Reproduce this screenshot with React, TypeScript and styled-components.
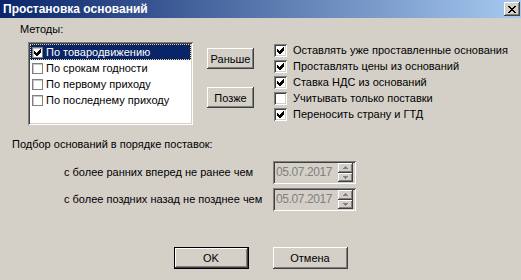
import React from "react";
import styled, { createGlobalStyle } from "styled-components";

const GlobalStyle = createGlobalStyle`
  html, body { margin: 0; padding: 0; background: #d4d0c8; }
  body { font-family: "Liberation Sans", Arial, sans-serif; font-size: 11px; color: #000; }
`;

const raised = `
  box-shadow: inset -1px -1px #404040, inset 1px 1px #ffffff, inset -2px -2px #808080, inset 2px 2px #d4d0c8;
`;
const sunken = `
  box-shadow: inset 1px 1px #808080, inset -1px -1px #ffffff, inset 2px 2px #404040, inset -2px -2px #d4d0c8;
`;

const Window = styled.div`
  width: 521px;
  height: 280px;
  background: #d4d0c8;
  display: flex;
  flex-direction: column;
  overflow: hidden;
`;

const TitleBar = styled.div`
  height: 18px;
  flex: none;
  display: flex;
  align-items: center;
  justify-content: space-between;
  padding: 0 1px 0 3px;
  background: linear-gradient(to right, #0a246a, #a6caf0);
`;

const Title = styled.span`
  color: #fff;
  font-weight: bold;
  font-size: 12px;
  line-height: 18px;
`;

const CloseButton = styled.div`
  width: 16px;
  height: 14px;
  background: #d4d0c8;
  ${raised}
  display: flex;
  align-items: center;
  justify-content: center;
`;

const TopSection = styled.div`
  display: flex;
  padding-top: 5px;
`;

const MethodsCol = styled.div`
  display: flex;
  flex-direction: column;
  padding-left: 20px;
`;

const Label = styled.div<{ $indent?: number }>`
  height: 13px;
  line-height: 13px;
  white-space: nowrap;
  padding-left: ${(p) => p.$indent ?? 0}px;
`;

const ListBox = styled.div`
  margin: 6px 0 0 8px;
  width: 165px;
  height: 83px;
  box-sizing: border-box;
  padding: 2px;
  background: #fff;
  ${sunken}
`;

const ListRow = styled.div<{ $selected?: boolean }>`
  height: 16px;
  display: flex;
  align-items: center;
  box-sizing: border-box;
  padding-left: 1px;
  background: ${(p) => (p.$selected ? "#0a246a" : "transparent")};
  color: ${(p) => (p.$selected ? "#fff" : "#000")};
  border: 1px dotted ${(p) => (p.$selected ? "#e8d48a" : "transparent")};
`;

const FlatBox = styled.div`
  width: 11px;
  height: 11px;
  flex: none;
  box-sizing: border-box;
  border: 1px solid #808080;
  box-shadow: inset 1px 1px #c8c8c8;
  background: #fff;
  margin-right: 3px;
  display: flex;
  align-items: center;
  justify-content: center;
`;

const ButtonsCol = styled.div`
  display: flex;
  flex-direction: column;
  gap: 18px;
  padding-top: 25px;
  margin-left: 14px;
`;

const Button = styled.button<{ $w: number; $h: number; $default?: boolean }>`
  width: ${(p) => p.$w}px;
  height: ${(p) => p.$h}px;
  padding: 0;
  margin: 0;
  border: ${(p) => (p.$default ? "1px solid #000" : "none")};
  box-sizing: border-box;
  background: #d4d0c8;
  font-family: "Liberation Sans", Arial, sans-serif;
  font-size: 11px;
  color: #000;
  ${raised}
`;

const ChecksCol = styled.div`
  display: flex;
  flex-direction: column;
  padding-top: 19px;
  margin-left: 20px;
`;

const CheckRow = styled.div`
  height: 16px;
  display: flex;
  align-items: center;
  white-space: nowrap;
`;

const Box3D = styled.div`
  width: 13px;
  height: 13px;
  flex: none;
  background: #fff;
  ${sunken}
  margin-right: 6px;
  display: flex;
  align-items: center;
  justify-content: center;
`;

const OrderLabel = styled(Label)`
  margin-top: 13px;
`;

const DateGrid = styled.div`
  display: grid;
  grid-template-columns: 209px 83px;
  grid-auto-rows: 23px;
  row-gap: 4px;
  align-items: center;
  padding-left: 64px;
  margin-top: 10px;
`;

const DateField = styled.div`
  height: 23px;
  box-sizing: border-box;
  display: flex;
  align-items: center;
  padding: 2px 3px 2px 3px;
  background: #d4d0c8;
  ${sunken}
`;

const DateText = styled.span`
  flex: 1;
  color: #808080;
  font-size: 12px;
  letter-spacing: -0.4px;
  line-height: 19px;
`;

const Spin = styled.div`
  width: 15px;
  height: 19px;
  display: flex;
  flex-direction: column;
`;

const SpinHalf = styled.div`
  flex: 1;
  background: #d4d0c8;
  ${raised}
  display: flex;
  align-items: center;
  justify-content: center;
`;

const Footer = styled.div`
  display: flex;
  justify-content: center;
  gap: 24px;
  margin-top: 36px;
`;

const Check = () => (
  <svg width="7" height="7" viewBox="0 0 7 7" shapeRendering="crispEdges">
    <polygon points="0,2 2,4 6,0 7,0 7,3 3,7 2,7 0,5" fill="#000" />
  </svg>
);

const Arrow = ({ up }: { up?: boolean }) => (
  <svg width="5" height="3" viewBox="0 0 5 3" shapeRendering="crispEdges">
    <polygon points={up ? "2.5,0 5,3 0,3" : "0,0 5,0 2.5,3"} fill="#808080" />
  </svg>
);

const methods = [
  { text: "По товародвижению", checked: true, selected: true },
  { text: "По срокам годности" },
  { text: "По первому приходу" },
  { text: "По последнему приходу" },
];

const options = [
  { text: "Оставлять уже проставленные основания", checked: true },
  { text: "Проставлять цены из оснований", checked: true },
  { text: "Ставка НДС из оснований", checked: true },
  { text: "Учитывать только поставки", checked: false },
  { text: "Переносить страну и ГТД", checked: true },
];

const DateInput = () => (
  <DateField>
    <DateText>05.07.2017</DateText>
    <Spin>
      <SpinHalf>
        <Arrow up />
      </SpinHalf>
      <SpinHalf>
        <Arrow />
      </SpinHalf>
    </Spin>
  </DateField>
);

export default function App() {
  return (
    <>
      <GlobalStyle />
      <Window>
        <TitleBar>
          <Title>Простановка оснований</Title>
          <CloseButton>
            <svg width="8" height="7" viewBox="0 0 8 7" shapeRendering="crispEdges">
              <path d="M0 0h2v1h-2zM6 0h2v1h-2zM1 1h2v1h-2zM5 1h2v1h-2zM2 2h4v1h-4zM3 3h2v1h-2zM2 4h4v1h-4zM1 5h2v1h-2zM5 5h2v1h-2zM0 6h2v1h-2zM6 6h2v1h-2z" fill="#000" />
            </svg>
          </CloseButton>
        </TitleBar>
        <TopSection>
          <MethodsCol>
            <Label>Методы:</Label>
            <ListBox>
              {methods.map((m) => (
                <ListRow key={m.text} $selected={m.selected}>
                  <FlatBox>{m.checked && <Check />}</FlatBox>
                  {m.text}
                </ListRow>
              ))}
            </ListBox>
          </MethodsCol>
          <ButtonsCol>
            <Button $w={47} $h={21}>Раньше</Button>
            <Button $w={47} $h={21}>Позже</Button>
          </ButtonsCol>
          <ChecksCol>
            {options.map((o) => (
              <CheckRow key={o.text}>
                <Box3D>{o.checked && <Check />}</Box3D>
                {o.text}
              </CheckRow>
            ))}
          </ChecksCol>
        </TopSection>
        <OrderLabel $indent={12}>Подбор оснований в порядке поставок:</OrderLabel>
        <DateGrid>
          <Label>с более ранних вперед не ранее чем</Label>
          <DateInput />
          <Label>с более поздних назад не позднее чем</Label>
          <DateInput />
        </DateGrid>
        <Footer>
          <Button $w={75} $h={22} $default>OK</Button>
          <Button $w={75} $h={22}>Отмена</Button>
        </Footer>
      </Window>
    </>
  );
}
